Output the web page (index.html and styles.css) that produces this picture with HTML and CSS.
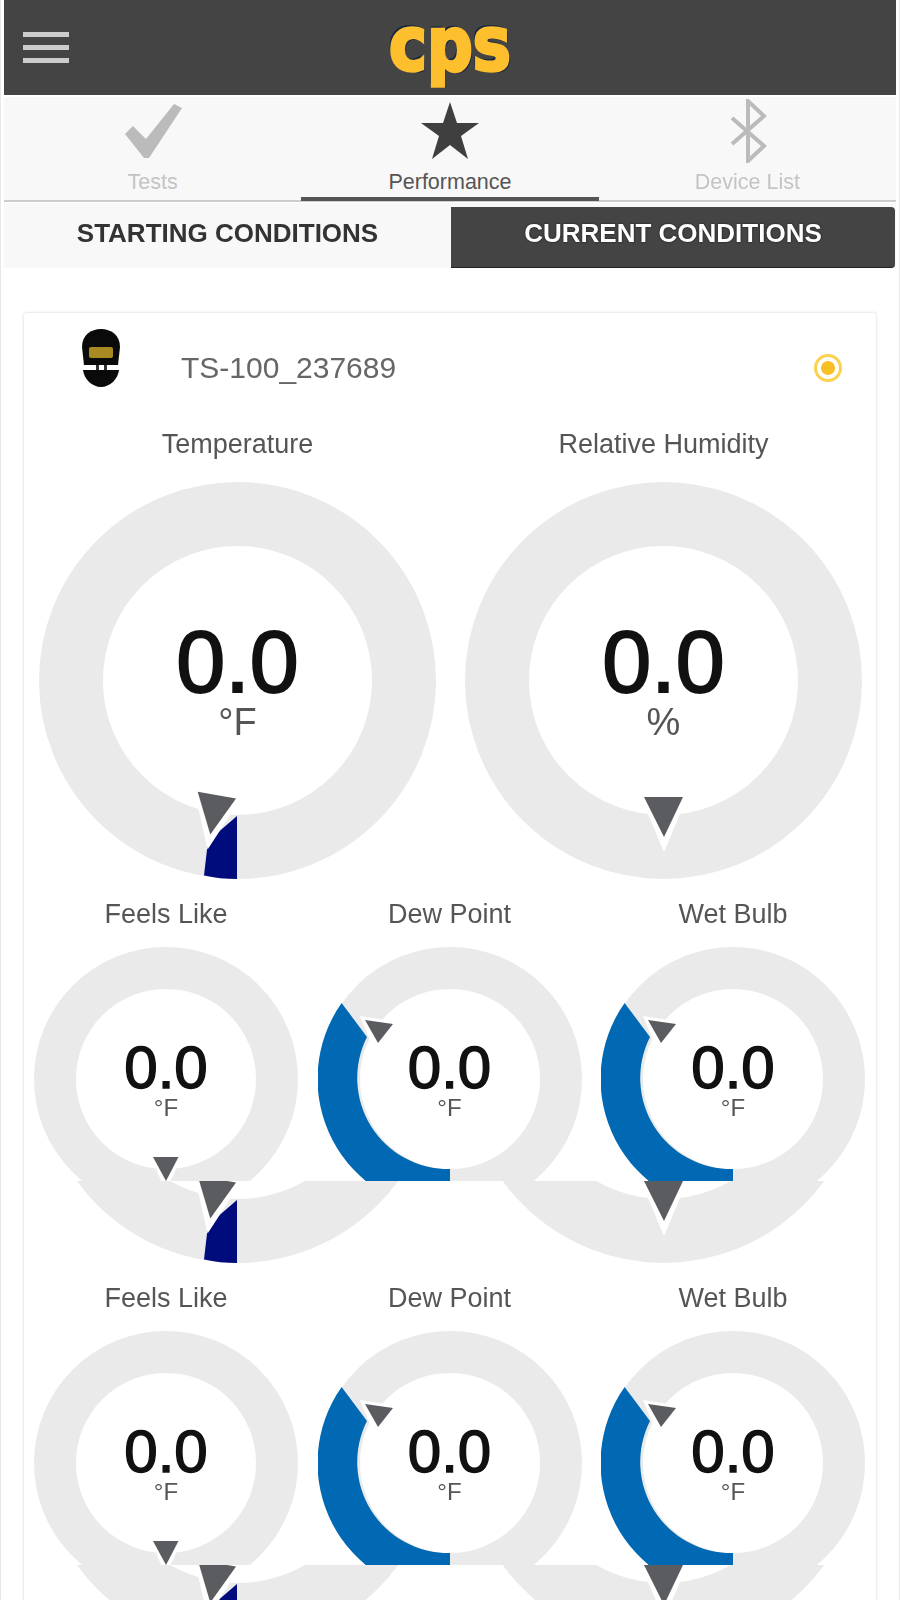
FILE: index.html
```html
<!DOCTYPE html>
<html lang="en">
<head>
    <meta charset="UTF-8">
    <meta name="viewport" content="width=device-width, initial-scale=1.0">
    <title>CPS - Performance</title>
    <link rel="stylesheet" href="styles.css">
</head>
<body>
    <!-- shared gauge drawings -->
    <svg class="defs" aria-hidden="true">
        <defs>
            <g id="big-pointer">
                <polygon points="174,311 224,311 199,370" fill="#fff"/>
                <polygon points="179,315 218,315 199,355" fill="#5a5c60"/>
            </g>
            <g id="big-temp">
                <circle cx="198.5" cy="198.5" r="166.5" fill="none" stroke="#ebeaeb" stroke-width="64"/>
                <path d="M198 334 L169 359 L165 393.5 Q181 397 198 397 Z" fill="#000b7c"/>
                <use href="#big-pointer" transform="rotate(10.2 198.5 198.5)"/>
            </g>
            <g id="big-humidity">
                <circle cx="198.5" cy="198.5" r="166.5" fill="none" stroke="#ebeaeb" stroke-width="64"/>
                <use href="#big-pointer"/>
            </g>
            <g id="small-feels">
                <circle cx="132" cy="132" r="111" fill="none" stroke="#ebeaeb" stroke-width="42"/>
                <polygon points="115,206 149,206 132,245" fill="#fff"/>
                <polygon points="119,210 144.5,210 132,234" fill="#5a5c60"/>
            </g>
            <g id="small-blue">
                <circle cx="132" cy="132" r="111" fill="none" stroke="#ebeaeb" stroke-width="42"/>
                <path d="M23.6 56 A132 132 0 0 0 132 264 L132 222 A91 91 0 0 1 49 90 Z" fill="#0168b3"/>
                <polygon points="42,69 80,75 58,108" fill="#fff"/>
                <polygon points="47,73 75,77 60,96" fill="#5a5c60"/>
            </g>
        </defs>
    </svg>

    <div class="app">
        <header class="topbar">
            <svg class="menu-icon" width="46" height="32" viewBox="0 0 46 32">
                <rect y="0" width="46" height="5" fill="#ccc"/>
                <rect y="13" width="46" height="5" fill="#ccc"/>
                <rect y="26" width="46" height="5" fill="#ccc"/>
            </svg>
            <span class="logo">cps</span>
        </header>

        <nav class="tabs">
            <div class="tab">
                <svg class="icon-check" width="58" height="56" viewBox="0 0 58 56">
                    <polygon points="1,30 9,22 22,35 50,0 58,4 25,54 20,54" fill="#bbb"/>
                </svg>
                <span>Tests</span>
            </div>
            <div class="tab active">
                <svg class="icon-star" width="60" height="58" viewBox="0 0 60 58">
                    <polygon points="30,0 37,21 59,21 41,34 48,57 30,43 12,57 19,34 1,21 23,21" fill="#3f3f3f"/>
                </svg>
                <span>Performance</span>
            </div>
            <div class="tab">
                <svg class="icon-bt" width="38" height="64" viewBox="0 0 38 64">
                    <polyline points="3,19 35,47 19,62 19,2 35,17 3,45" fill="none" stroke="#bbb" stroke-width="4"/>
                </svg>
                <span>Device List</span>
            </div>
        </nav>

        <div class="segments">
            <div class="segment">STARTING CONDITIONS</div>
            <div class="segment selected">CURRENT CONDITIONS</div>
        </div>

        <main class="card">
            <div class="device">
                <svg class="helmet" width="38" height="58" viewBox="0 0 38 58">
                    <path d="M0 18 C0 6 9 0 19 0 C29 0 38 6 38 18 L36 36 L2 36 Z" fill="#0a0a0a"/>
                    <rect x="7" y="18" width="24" height="11" rx="2" fill="#a98a22"/>
                    <path d="M1 41 L37 41 C36 50 28 58 19 58 C10 58 2 50 1 41 Z" fill="#0a0a0a"/>
                    <rect x="14" y="36" width="3" height="5" fill="#333"/>
                    <rect x="22" y="36" width="3" height="5" fill="#333"/>
                </svg>
                <span class="device-name">TS-100_237689</span>
                <svg class="status" width="30" height="30" viewBox="0 0 30 30">
                    <circle cx="15" cy="15" r="12.5" fill="none" stroke="#fbd24e" stroke-width="3"/>
                    <circle cx="15" cy="15" r="7" fill="#fbbf24"/>
                </svg>
            </div>

            <div class="big-row">
                <div class="big-gauge">
                    <h3 class="gauge-title">Temperature</h3>
                    <div class="dial">
                        <svg width="397" height="397" viewBox="0 0 397 397"><use href="#big-temp"/></svg>
                        <div class="readout">
                            <div class="value">0.0</div>
                            <div class="unit">°F</div>
                        </div>
                    </div>
                </div>
                <div class="big-gauge">
                    <h3 class="gauge-title">Relative Humidity</h3>
                    <div class="dial">
                        <svg width="397" height="397" viewBox="0 0 397 397"><use href="#big-humidity"/></svg>
                        <div class="readout">
                            <div class="value">0.0</div>
                            <div class="unit">%</div>
                        </div>
                    </div>
                </div>
            </div>

            <div class="small-row">
                <div class="small-gauge">
                    <h3 class="gauge-title">Feels Like</h3>
                    <div class="dial">
                        <svg width="264" height="234" viewBox="0 0 264 234"><use href="#small-feels"/></svg>
                        <div class="readout">
                            <div class="value">0.0</div>
                            <div class="unit">°F</div>
                        </div>
                    </div>
                </div>
                <div class="small-gauge">
                    <h3 class="gauge-title">Dew Point</h3>
                    <div class="dial">
                        <svg width="264" height="234" viewBox="0 0 264 234"><use href="#small-blue"/></svg>
                        <div class="readout">
                            <div class="value">0.0</div>
                            <div class="unit">°F</div>
                        </div>
                    </div>
                </div>
                <div class="small-gauge">
                    <h3 class="gauge-title">Wet Bulb</h3>
                    <div class="dial">
                        <svg width="264" height="234" viewBox="0 0 264 234"><use href="#small-blue"/></svg>
                        <div class="readout">
                            <div class="value">0.0</div>
                            <div class="unit">°F</div>
                        </div>
                    </div>
                </div>
            </div>

            <!-- the repeated big row only shows its bottom strip -->
            <div class="big-row strip">
                <svg width="397" height="82" viewBox="0 315 397 82"><use href="#big-temp"/></svg>
                <svg width="397" height="82" viewBox="0 315 397 82"><use href="#big-humidity"/></svg>
            </div>

            <div class="small-row">
                <div class="small-gauge">
                    <h3 class="gauge-title">Feels Like</h3>
                    <div class="dial">
                        <svg width="264" height="234" viewBox="0 0 264 234"><use href="#small-feels"/></svg>
                        <div class="readout">
                            <div class="value">0.0</div>
                            <div class="unit">°F</div>
                        </div>
                    </div>
                </div>
                <div class="small-gauge">
                    <h3 class="gauge-title">Dew Point</h3>
                    <div class="dial">
                        <svg width="264" height="234" viewBox="0 0 264 234"><use href="#small-blue"/></svg>
                        <div class="readout">
                            <div class="value">0.0</div>
                            <div class="unit">°F</div>
                        </div>
                    </div>
                </div>
                <div class="small-gauge">
                    <h3 class="gauge-title">Wet Bulb</h3>
                    <div class="dial">
                        <svg width="264" height="234" viewBox="0 0 264 234"><use href="#small-blue"/></svg>
                        <div class="readout">
                            <div class="value">0.0</div>
                            <div class="unit">°F</div>
                        </div>
                    </div>
                </div>
            </div>

            <div class="big-row strip">
                <svg width="397" height="82" viewBox="0 315 397 82"><use href="#big-temp"/></svg>
                <svg width="397" height="82" viewBox="0 315 397 82"><use href="#big-humidity"/></svg>
            </div>
        </main>
    </div>
</body>
</html>
```

FILE: styles.css
```css
html, body {
    margin: 0;
    padding: 0;
    height: 1600px;
    overflow: hidden;
    background: #fff;
    font-family: "Liberation Sans", Arial, sans-serif;
}
.defs {
    display: none;
}
.app {
    height: 1600px;
    overflow: hidden;
    padding: 0 3px;
    border-left: 1px solid #e8e8e8;
    border-right: 1px solid #e8e8e8;
    box-sizing: border-box;
    filter: blur(0.6px);
}
.topbar {
    height: 95px;
    background: #444;
    display: flex;
    align-items: center;
    justify-content: center;
    position: relative;
}
.menu-icon {
    position: absolute;
    left: 19px;
    top: 32px;
}
.logo {
    display: block;
    font-family: "DejaVu Sans", sans-serif;
    font-weight: bold;
    font-size: 64px;
    line-height: 64px;
    color: #fdbf2d;
    -webkit-text-stroke: 3px #fdbf2d;
    text-shadow: -2px -2px 0 #15263f, 2px 2px 0 #15263f;
    transform: translateY(-4px) scaleY(1.16);
}
.tabs {
    margin-top: 2px;
    height: 105px;
    background: #f8f8f8;
    border-bottom: 2px solid #ccc;
    box-sizing: border-box;
    display: grid;
    grid-template-columns: repeat(3, 1fr);
}
.tab {
    display: flex;
    flex-direction: column;
    align-items: center;
    justify-content: space-between;
    height: 98px;
    box-sizing: border-box;
    font-size: 21.5px;
    line-height: 26px;
    color: #c4c4c4;
}
.tab.active {
    height: 104px;
    padding-bottom: 2px;
    border-bottom: 4px solid #555;
    color: #555;
}
.icon-check {
    margin-top: 7px;
}
.icon-star {
    margin-top: 5px;
}
.icon-bt {
    margin-top: 2px;
    margin-left: 2px;
}
.segments {
    margin-top: 1px;
    display: grid;
    grid-template-columns: 447px 444px;
    height: 65px;
    background: #f8f8f8;
}
.segment {
    display: flex;
    align-items: center;
    justify-content: center;
    padding-bottom: 4px;
    box-sizing: border-box;
    font-size: 26px;
    font-weight: bold;
    color: #333;
}
.segment.selected {
    margin-top: 4px;
    padding-bottom: 8px;
    background: #444;
    color: #fff;
    border-radius: 0 4px 4px 0;
    border-bottom: 1px solid #222;
    text-shadow: 0 0 2px #111;
}
.card {
    width: 854px;
    box-sizing: border-box;
    margin: 44px 0 0 19px;
    padding: 0 14px 0 15px;
    border: 1px solid #eee;
    border-bottom: 0;
    border-radius: 4px 4px 0 0;
    box-shadow: 0 0 3px rgba(0,0,0,0.08);
}
.device {
    height: 110px;
    display: flex;
    align-items: center;
    padding-left: 43px;
    padding-right: 19px;
}
.helmet {
    align-self: flex-start;
    margin-top: 16px;
}
.device-name {
    margin-left: 61px;
    flex: 1;
    font-size: 30px;
    color: #666;
}
.big-row {
    display: grid;
    grid-template-columns: 397px 397px;
    gap: 29px;
    margin-top: 6px;
}
.big-row.strip {
    margin-top: 0;
    height: 82px;
}
.strip svg {
    display: block;
}
.small-row {
    display: flex;
    justify-content: space-between;
    margin: 20px -3px 0 -5px;
}
.gauge-title {
    margin: 0;
    height: 30px;
    line-height: 30px;
    text-align: center;
    font-size: 27px;
    font-weight: normal;
    color: #555;
}
.dial {
    display: grid;
    justify-items: center;
    margin-top: 23px;
}
.small-gauge .dial {
    margin-top: 18px;
}
.dial svg,
.readout {
    grid-area: 1 / 1;
}
.dial svg {
    display: block;
}
.readout {
    text-align: center;
    padding-top: 136px;
}
.value {
    font-size: 88px;
    line-height: 88px;
    color: #111;
    -webkit-text-stroke: 2px #111;
}
.unit {
    font-size: 38px;
    line-height: 38px;
    margin-top: -3px;
    color: #555;
}
.small-gauge .readout {
    padding-top: 91px;
}
.small-gauge .value {
    font-size: 60px;
    line-height: 60px;
    -webkit-text-stroke: 1.5px #111;
}
.small-gauge .unit {
    font-size: 24px;
    line-height: 24px;
    margin-top: -2.5px;
}
```
